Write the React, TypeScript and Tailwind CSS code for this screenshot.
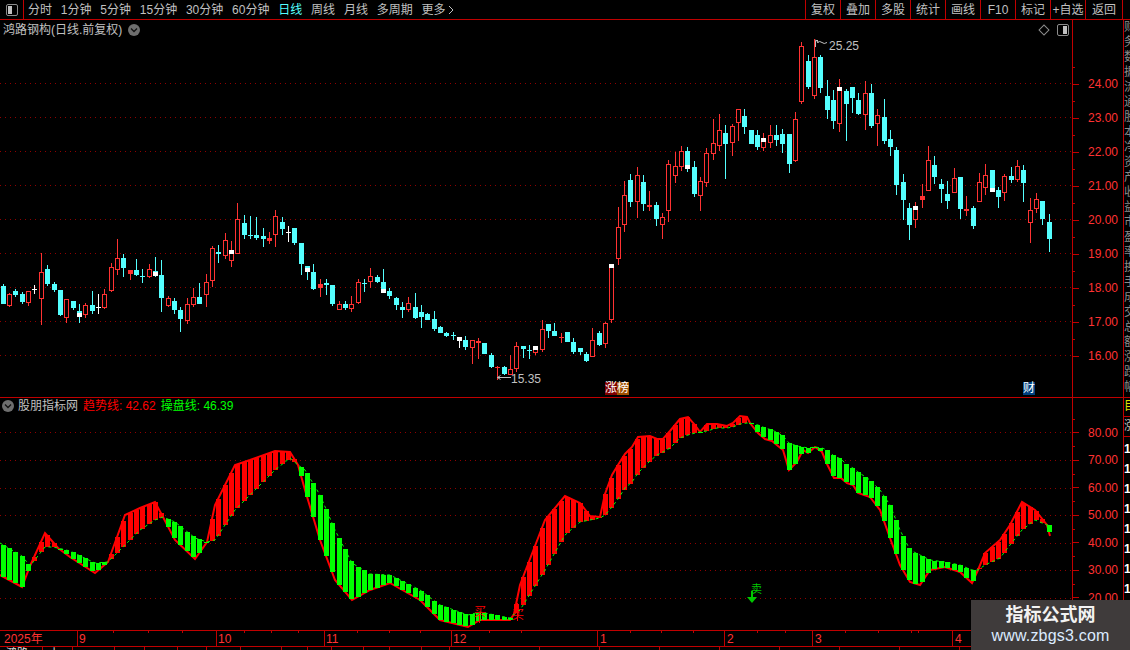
import React from "react";

type C = [string, number, number, number, number, number?, number?];
const candles: C[] = [
["c",284,286,304,304],["r",293,294,306,307],["c",289,291,295,297],["c",292,294,302,304],["r",291,291,303,306],["w",285,289,290,294],
["r",253,272,299,325],["c",265,269,284,286],["c",282,284,290,292],["c",290,290,315,316],["r",299,299,318,323],["c",301,301,308,310],
["c",304,311,317,323,313,317],["r",303,305,315,318],["c",291,305,311,314],["w",294,307,308,314],["r",289,294,308,309],["r",263,267,291,292],
["r",239,258,270,275],["c",254,258,268,277],["r",270,270,274,280],["c",259,270,275,276],["c",269,276,277,283],["r",264,269,277,278],
["c",257,271,276,277,272,276],["c",260,275,298,312],["r",296,298,306,307],["c",298,301,310,314],["c",307,310,319,332],["r",298,304,321,324],
["r",288,297,305,307],["c",283,297,304,304],["r",274,282,295,307],["r",246,248,281,287],["c",245,252,254,263],["r",233,240,256,259],
["r",241,250,261,267,250,254],["r",203,219,254,254],["c",215,223,235,239],["c",216,235,236,239],["c",217,235,238,240],["c",228,236,239,247],
["r",232,238,241,244],["r",210,216,235,247],["c",217,222,229,235],["w",226,232,233,242],["c",228,228,243,245],["c",243,243,264,275],
["c",266,266,272,280,268,272],["c",264,272,289,290],["r",279,284,288,297],["c",279,283,285,295],["c",285,285,304,306],["r",301,304,310,310],
["c",301,304,308,310],["r",296,304,309,312],["r",279,282,303,304],["c",279,283,284,292],["r",268,276,282,288],["c",275,277,282,283],
["c",269,282,293,293,289,293],["c",288,291,296,299],["c",297,298,305,310],["c",302,307,310,318],["r",297,303,310,312],["c",293,307,318,319],
["c",305,312,317,328],["c",313,314,320,320],["c",311,319,329,331],["c",326,327,333,333],["c",332,333,336,337],["c",332,335,336,340],
["w",337,337,341,348],["c",336,340,347,350],["r",340,340,348,364],["r",338,341,343,359],["c",343,343,354,354],["c",353,355,367,368],
["r",366,367,368,380],["c",366,367,374,375],["r",355,369,375,375],["r",342,346,369,372],["c",346,346,349,358],["c",345,350,351,359],
["r",346,346,353,355,346,350],["r",320,329,350,352],["c",324,324,331,338],["c",323,331,336,336],["r",333,337,338,343],["c",332,332,342,342],
["c",338,342,352,354],["c",348,348,352,355],["c",352,354,361,362],["r",328,340,357,357],["c",331,333,345,346],["r",322,323,344,348],
["r",264,264,320,323,264,268],["r",207,227,259,265],["r",181,195,225,232],["c",174,180,202,207],["r",167,175,202,218],["c",175,182,204,211],
["r",191,205,207,211],["c",202,205,219,226],["r",213,217,225,239],["r",160,164,211,222],["r",152,166,176,183],["r",146,151,167,171],
["c",147,151,169,172,165,169],["c",161,167,194,197],["r",177,181,196,211],["r",148,153,183,187],["r",119,143,154,160],["r",114,130,146,151],
["c",125,133,144,179],["r",124,126,143,156],["r",109,109,123,141],["c",109,116,127,134],["c",130,130,144,144],["c",130,135,147,150],
["r",133,138,148,151,138,142],["r",125,135,143,148],["c",125,135,140,146],["c",129,134,144,153],["c",134,134,164,173],["r",112,119,161,162],
["r",42,46,102,104],["c",55,61,87,89],["r",39,57,96,99],["c",55,57,88,93],["c",80,96,110,119],["c",90,100,121,129],
["r",79,87,124,132,87,91],["c",89,91,104,141],["c",87,87,98,113],["c",93,100,114,115],["r",81,93,115,130],["c",84,93,126,128],
["r",109,115,124,146],["c",99,117,141,144],["c",130,139,147,156],["c",147,150,185,195],["c",174,182,200,220],["c",203,208,225,240],
["r",202,206,220,228,206,210],["r",184,196,200,208],["r",146,160,191,191],["c",156,165,177,184],["c",179,184,189,203],["c",181,194,201,209],
["r",168,178,193,193],["c",177,177,209,219],["r",196,209,211,216],["c",206,208,226,229],["r",173,182,202,202],["r",164,175,188,195],
["c",170,170,192,192,188,192],["c",187,190,197,208],["r",174,176,193,201],["c",167,176,180,183],["r",160,166,180,182],["c",165,170,183,202],
["r",198,210,223,243],["r",193,199,209,213],["c",201,201,219,225],["c",214,222,239,252],
];

const keys: [number, number, number][] = [
[0,575,543],[22,587,556],[30,566,566],[45,533,547],[52,541,547],[58,548,548],[70,557,551],[95,573,563],[108,562,562],[125,515,545],[140,508,530],[155,502,520],[163,517,517],[175,540,522],[195,559,538],[207,542,542],[215,505,540],[235,465,510],[250,460,495],[275,451,470],[290,452,458],[298,465,465],[305,490,470],[320,540,495],[335,580,530],[352,600,563],[370,590,574],[390,583,575],[420,600,590],[440,620,605],[468,627,615],[480,620,612],[510,620,618],[514,614,614],[520,585,610],[545,520,570],[565,496,535],[580,503,522],[590,516,520],[600,517,518],
[605,494,515],[612,475,507],[618,465,499],[625,454,488],[632,447,482],[638,437,473],[650,436,461],[657,439,455],[663,439,452],[670,431,448],[680,419,438],[688,417,435],[695,425,433],[700,432,432],[707,424,431],[717,424,428],[727,426,428],[733,423,427],[740,416,424],[747,417,423],[750,423,423],[758,433,425],[765,439,428],[772,441,430],[778,446,433],[783,450,436],[789,470,443],[797,462,446],[803,450,447],[808,453,448],[815,447,447],[822,452,448],[827,464,450],[834,478,456],[841,478,459],[847,483,465],[853,485,468],[858,493,472],[870,497,480],[880,510,490],[890,538,505],[900,565,530],[910,582,550],[920,585,555],[930,570,560],[945,567,562],[960,572,565],[972,583,570],[978,570,570],[985,553,565],[1000,540,558],[1010,525,545],[1022,502,530],[1035,510,520],[1047,525,525],[1050,536,525],
];

const cx = (i: number) => Math.floor(3.3 + 6.338 * i);
const interp = (x: number, k: 1 | 2) => {
  for (let j = 1; j < keys.length; j++) {
    if (x <= keys[j][0]) {
      const a = keys[j - 1], b = keys[j];
      return a[k] + ((b[k] - a[k]) * (x - a[0])) / (b[0] - a[0]);
    }
  }
  return keys[keys.length - 1][k];
};

const RED = "#ff3232";
const CY = "#54ffff";

function Candle({ d, i }: { d: C; i: number }) {
  const [t, wt, bt, bb, wb, w1, w2] = d;
  const x = cx(i);
  const col = t === "r" ? RED : t === "c" ? CY : "#ffffff";
  const hollow = t === "r" && bb - bt > 4;
  return (
    <g>
      <rect x={x} y={wt} width={1} height={Math.max(wb - wt, 1)} fill={col} />
      <rect x={x - 2} y={bt} width={5} height={Math.max(bb - bt, 1)} fill={col} />
      {hollow && <rect x={x - 1} y={bt + 1} width={3} height={bb - bt - 2} fill="#000000" />}
      {w1 !== undefined && <rect x={x - 2} y={w1} width={5} height={(w2 as number) - w1} fill="#ffffff" />}
    </g>
  );
}

function Grid({ ys }: { ys: number[] }) {
  return (
    <>
      {ys.map((y) => (
        <line key={y} x1={0} x2={1072} y1={y + 0.5} y2={y + 0.5} stroke="#900000" strokeDasharray="1 4" />
      ))}
    </>
  );
}

function MainChart() {
  return (
    <svg viewBox="0 20 1072 377" width={1072} height={377} className="block" shapeRendering="crispEdges">
      <Grid ys={[83, 117, 151, 185, 219, 253, 287, 321, 355]} />
      {candles.map((d, i) => (
        <Candle key={i} d={d} i={i} />
      ))}
      <g stroke="#c0c0c0" fill="none" strokeWidth={1} shapeRendering="auto">
        <path d="M815.5 47V40.5H818M815.5 40l3 2.5M817 42.5q3-2 5 0t5 0" />
        <path d="M497.5 377.5H511M497.5 377.5l3-2M497.5 377.5l3 2" />
      </g>
      <text x={829} y={50} fill="#c0c0c0" fontSize={12} shapeRendering="auto">25.25</text>
      <text x={511} y={383} fill="#c0c0c0" fontSize={12} shapeRendering="auto">15.35</text>
    </svg>
  );
}

function IndChart() {
  const linePts = (k: 1 | 2) => keys.map((p) => `${p[0]},${p[k]}`).join(" ");
  return (
    <svg viewBox="0 398 1072 232" width={1072} height={232} className="block" shapeRendering="crispEdges">
      <Grid ys={[432, 460, 488, 515, 543, 570, 598]} />
      <polyline points={linePts(1)} fill="none" stroke="#ff0000" strokeWidth={2} shapeRendering="auto" />
      {candles.map((_, i) => {
        const x = cx(i);
        const a = Math.round(interp(x, 1));
        const b = Math.round(interp(x, 2));
        const red = a < b;
        return (
          <rect
            key={i}
            x={x - 2}
            y={Math.min(a, b)}
            width={5}
            height={Math.max(Math.abs(a - b), 1)}
            fill={red ? "#ff0000" : "#00ff00"}
          />
        );
      })}
      <polyline points={linePts(2)} fill="none" stroke="#00ff00" strokeWidth={1} strokeDasharray="3 3" shapeRendering="auto" />
      <g shapeRendering="auto">
        <text x={474} y={616} fill="#ff0000" fontSize={12}>买</text>
        <rect x={479} y={615} width={1} height={8} fill="#ff0000" />
        <text x={512} y={619} fill="#ff0000" fontSize={12}>买</text>
        <rect x={517} y={603} width={1} height={18} fill="#ff0000" />
        <text x={751} y={593} fill="#00c800" fontSize={11}>卖</text>
        <rect x={751} y={591} width={2} height={8} fill="#00c800" />
        <polygon points="747,597 757,597 752,603" fill="#00c800" />
      </g>
    </svg>
  );
}

function Chevron() {
  return (
    <span className="flex h-[12px] w-[12px] items-center justify-center rounded-full bg-[#6e6e6e]">
      <svg width="8" height="6" viewBox="0 0 8 6" fill="none">
        <path d="M1 1.5l3 3 3-3" stroke="#111" strokeWidth="1.3" />
      </svg>
    </span>
  );
}

function PanelIcon({ flip = false }: { flip?: boolean }) {
  return (
    <svg width={12} height={12} viewBox="0 0 12 12" fill="none">
      <rect x="0.5" y="0.5" width="11" height="11" rx="1.5" stroke="#8c8c8c" />
      <rect x={flip ? 2 : 6} y="2" width="4" height="8" fill="#c0c0c0" />
    </svg>
  );
}

function Axis({ labels, padClass, rowH }: { labels: string[]; padClass: string; rowH: string }) {
  return (
    <div className={`w-[51px] border-l border-[#c00000] ${padClass}`}>
      {labels.map((l) => (
        <div key={l} className={`relative flex items-center ${rowH}`}>
          <span className="absolute left-0 top-0 h-px w-[2px] bg-[#c00000]" />
          <span className="h-px w-[6px] bg-[#c00000]" />
          <span className="ml-[9px] text-[12px] leading-none text-[#ff3232]">{l}</span>
        </div>
      ))}
    </div>
  );
}

const leftTabs: [string, boolean][] = [
  ["分时", false], ["1分钟", false], ["5分钟", false], ["15分钟", false], ["30分钟", false], ["60分钟", false],
  ["日线", true], ["周线", false], ["月线", false], ["多周期", false],
];
const rightBtns = ["复权", "叠加", "多股", "统计", "画线", "F10", "标记", "+自选", "返回"];

const timeCells: [string, string, string][] = [
  ["2025年", "w-[78px]", "pl-[4px]"],
  ["9", "w-[139px]", "pl-[1px]"],
  ["10", "w-[108px]", "pl-[1px]"],
  ["11", "w-[127px]", "pl-[1px]"],
  ["12", "w-[146px]", "pl-[1px]"],
  ["1", "w-[127px]", "pl-[2px]"],
  ["2", "w-[88px]", "pl-[2px]"],
  ["3", "w-[140px]", "pl-[2px]"],
  ["4", "flex-1", "pl-[2px]"],
];
const timeTicks = [113, 148, 182, 244, 271, 298, 357, 389, 420, 489, 521, 630, 661, 693, 757, 785, 845, 878, 911, 918];
const stripTop = ["财", "务", "数", "据", "流", "通", "股", "本", "净", "资", "产", "收", "益", "市", "盈", "率", "换", "手", "成", "交", "总", "额", "涨", "跌", "幅"];
const bottomSeps = [43, 30, 42, 30, 33, 29, 34, 41, 26, 24, 32, 26, 32, 28, 30, 60, 60, 60, 60, 60, 60, 60, 60];

export default function App() {
  return (
    <div
      className="relative flex h-[650px] w-[1130px] flex-col overflow-hidden bg-black text-[12px] text-[#c0c0c0]"
      style={{ fontFamily: '"Liberation Sans","Noto Sans CJK SC",sans-serif' }}
    >
      {/* toolbar */}
      <div className="flex h-[20px] shrink-0 items-center border-b border-[#c00000]">
        <div className="flex h-full w-[24px] items-center justify-center border-r border-[#c00000]">
          <PanelIcon flip />
        </div>
        <div className="ml-[4px] flex flex-1 items-center gap-[8.8px] leading-none">
          {leftTabs.map(([t, on]) => (
            <span key={t} className={on ? "text-[#54ffff]" : ""}>{t}</span>
          ))}
          <span className="flex items-center gap-[2px]">
            更多
            <svg width="6" height="10" viewBox="0 0 6 10" fill="none">
              <path d="M1 1l4 4-4 4" stroke="#c0c0c0" />
            </svg>
          </span>
        </div>
        <div className="mr-[7px] flex h-full border-l border-[#c00000]">
          {rightBtns.map((b, i) => (
            <span
              key={b}
              className={`flex h-full items-center justify-center border-r border-[#c00000] leading-none ${i === 8 ? "w-[37px]" : "w-[35px]"}`}
            >
              {b}
            </span>
          ))}
        </div>
      </div>

      {/* price pane */}
      <div className="flex h-[378px] shrink-0 border-b border-[#c00000]">
        <div className="relative w-[1072px]">
          <MainChart />
          <div className="absolute left-[3px] top-[3px] flex items-center gap-[6px] leading-[14px]">
            <span>鸿路钢构(日线.前复权)</span>
            <Chevron />
          </div>
          <div className="absolute right-[3px] top-[4px] flex items-center gap-[9px]">
            <span className="h-[8px] w-[8px] rotate-45 border border-[#8c8c8c]" />
            <PanelIcon />
          </div>
          <span className="absolute left-[605px] top-[362px] flex text-[12px] leading-[13px] text-white">
            <span className="bg-[#800000]">涨</span>
            <span className="bg-[#a05000]">榜</span>
          </span>
          <span className="absolute left-[1023px] top-[362px] bg-[#004080] text-[12px] leading-[13px] text-white">财</span>
        </div>
        <Axis
          labels={["24.00", "23.00", "22.00", "21.00", "20.00", "19.00", "18.00", "17.00", "16.00"]}
          padClass="pt-[47px]"
          rowH="h-[34px]"
        />
        <div className="flex-1 overflow-hidden border-l border-[#c00000] text-[12px] leading-[15px] text-[#8a8a8a]">
          {stripTop.map((c, i) => (
            <div key={i}>{c}</div>
          ))}
        </div>
      </div>

      {/* indicator pane */}
      <div className="flex h-[233px] shrink-0 border-b border-[#c00000]">
        <div className="relative w-[1072px]">
          <IndChart />
          <div className="absolute left-[2px] top-[1px] flex items-center leading-[14px]">
            <Chevron />
            <span className="ml-[4px]">股朋指标网</span>
            <span className="ml-[5px] text-[#ff0000]">趋势线: 42.62</span>
            <span className="ml-[5px] text-[#00ff00]">操盘线: 46.39</span>
          </div>
        </div>
        <Axis
          labels={["80.00", "70.00", "60.00", "50.00", "40.00", "30.00", "20.00"]}
          padClass="pt-[20.75px]"
          rowH="h-[27.5px]"
        />
        <div className="flex flex-1 flex-col overflow-hidden border-l border-[#c00000] leading-[15px]">
          <div className="h-[19px] border-b border-[#c00000] pt-[1px] text-[#e0e000]">目</div>
          <div className="h-[20px] border-b border-[#c00000] pt-[2px] text-[#c0c0c0]">涨</div>
          <div className="pt-[2px] font-bold leading-[20px] text-white">
            {["1", "1", "1", "1", "1", "1", "1", "1", "1"].map((n, i) => (
              <div key={i}>{n}</div>
            ))}
          </div>
        </div>
      </div>

      {/* time axis */}
      <div className="relative flex h-[16px] shrink-0 border-b border-[#c00000] text-[12px] leading-[16px] text-[#ff3232]">
        {timeCells.map(([t, w, p]) => (
          <div key={t} className={`${w} ${p} ${t === "4" ? "" : "border-r border-[#c00000]"}`}>{t}</div>
        ))}
        <svg className="absolute left-0 top-0" width="1130" height="3" shapeRendering="crispEdges">
          {timeTicks.map((x) => (
            <rect key={x} x={x} y={0} width={1} height={2} fill="#c00000" />
          ))}
        </svg>
      </div>

      {/* cut off status row */}
      <div className="flex h-[4px] shrink-0 overflow-hidden text-[11px] leading-[12px] text-[#e0e0e0]">
        {bottomSeps.map((w, i) => (
          <div key={i} className="shrink-0 border-r border-[#c00000] pl-[6px]" style={{ width: w }}>
            {i === 0 ? "鸿路" : i === 1 ? "上" : ""}
          </div>
        ))}
      </div>

      {/* watermark */}
      <div className="absolute bottom-0 right-0 flex h-[50px] w-[159px] flex-col items-center bg-[#3f3b3b]">
        <span className="mt-[5px] text-[18px] font-bold leading-[20px] text-[#f2f2f2]">指标公式网</span>
        <span className="mt-[2px] text-[16px] leading-[18px] tracking-[0.2px] text-[#dcebff]">www.zbgs3.com</span>
      </div>
    </div>
  );
}
